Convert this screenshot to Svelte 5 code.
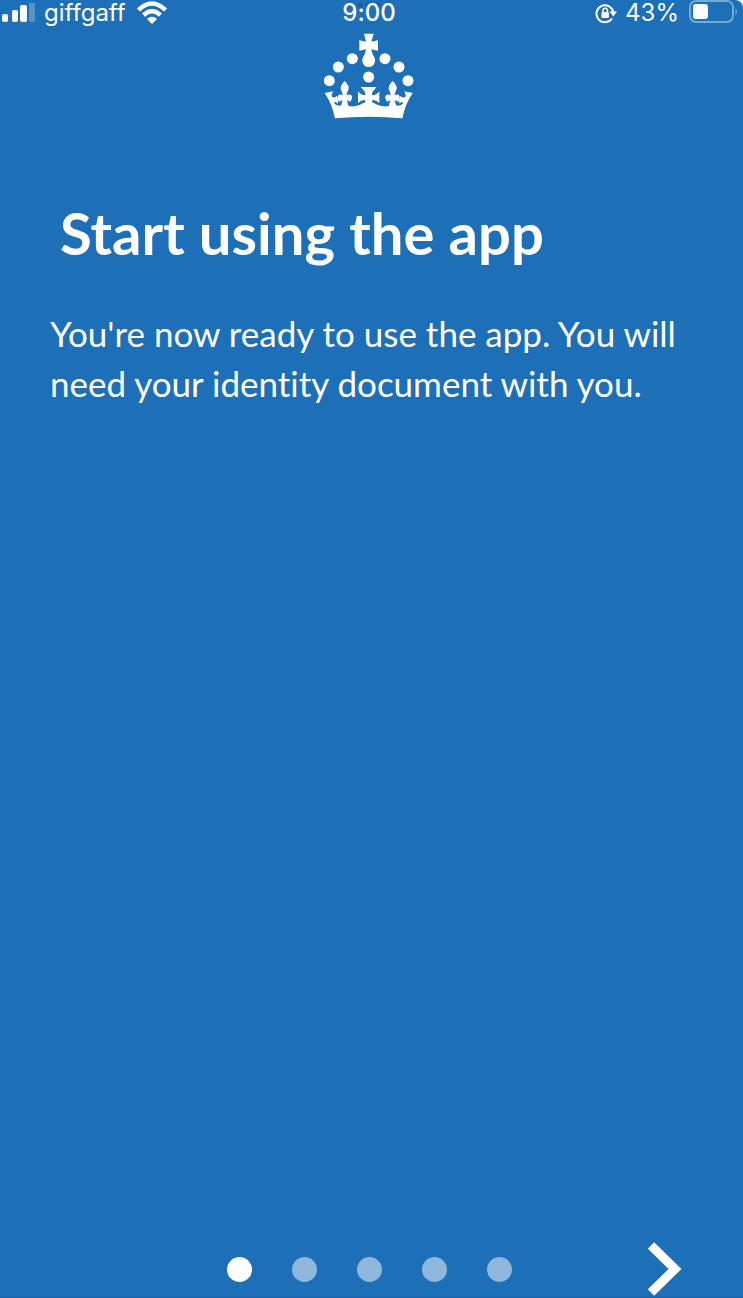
<script>
    const steps = 5
    const carrier = 'giffgaff'
    const time = '9:00'
    const charge = 43

    let current = $state(0)

    function next() {
        current = (current + 1) % steps
    }
</script>

<svelte:head><title>Start using the app</title></svelte:head>

<div class="screen">
    <div class="status">
        <div class="left">
            <svg class="signal" width="34" height="20" viewBox="0 0 34 20" fill="#fff" aria-hidden="true">
                <rect x="0" y="11" width="6" height="8" rx="2" />
                <rect x="10" y="7" width="6" height="12" rx="2" />
                <rect x="18" y="2" width="7" height="17" rx="2" />
                <rect x="27" y="-2" width="6" height="21" rx="2" opacity=".25" />
            </svg>
            <span class="carrier">{carrier}</span>
            <svg class="wifi" width="32" height="24" viewBox="0 0 32 24" aria-hidden="true">
                <path d="M2.500 9Q16-4 29.500 9" fill="none" stroke="#fff" stroke-width="4.500" />
                <path d="M7.500 14Q16 6.500 24.500 14" fill="none" stroke="#fff" stroke-width="4.500" />
                <path d="M11 18Q16 13.500 21 18L16 23Z" fill="#fff" />
            </svg>
        </div>
        <div class="time">
            <svg class="grip" width="24" height="6" viewBox="0 0 24 6" fill="#1a5c9c" aria-hidden="true">
                <circle cx="3" cy="3" r="2.500" />
                <circle cx="12" cy="3" r="2.500" />
                <circle cx="21" cy="3" r="2.500" />
            </svg>
            <span>{time}</span>
        </div>
        <div class="right">
            <svg class="lock" width="22" height="21" viewBox="0 0 22 21" aria-hidden="true">
                <path d="M18.300 9A8.500 8.500 0 1 0 17 15.500" fill="none" stroke="#fff" stroke-width="2" />
                <path d="M14.500 8.500h7.500l-3.700 5z" fill="#fff" />
                <path d="M8 9.500V7.500a2.200 2.200 0 0 1 4.400 0v2" fill="none" stroke="#fff" stroke-width="1.500" />
                <rect x="6.500" y="9" width="7.400" height="6" rx="1" fill="#fff" />
            </svg>
            <span class="charge">{charge}%</span>
            <svg class="battery" width="49" height="24" viewBox="0 0 49 24" aria-hidden="true">
                <rect x="1" y="1" width="43" height="21" rx="6" fill="none" stroke="#76a9d6" stroke-width="2" />
                <rect x="4" y="4" width="15" height="15" rx="3" fill="#fff" />
                <path d="M46.500 8q3 3.500 0 7z" fill="#76a9d6" />
            </svg>
        </div>
    </div>

    <svg class="crown" width="90" height="86" viewBox="42 100 270 258" fill="#fff" role="img" aria-label="Crown">
        <defs>
            <g id="side">
                <circle cx="127" cy="177" r="16.500" />
                <circle cx="85" cy="202" r="16.500" />
                <circle cx="58" cy="243" r="16.500" />
                <!-- fleur-de-lis -->
                <path d="M104 244Q90 258 92 268Q97 276 98 288Q91 281 85 287Q79 296 88 306L98 301L92 322H116L111 301L120 306Q130 296 124 287Q118 281 110 288Q111 276 116 268Q118 258 104 244Z" />
                <!-- outer half cross -->
                <path d="M44 280L69 275L64 289Q73 299 80 288Q87 300 84 312Q76 304 72 309Q76 316 84 318L75 356Q66 312 44 280Z" />
            </g>
        </defs>
        <use href="#side" />
        <use href="#side" transform="matrix(-1 0 0 1 352 0)" />
        <circle cx="176" cy="232" r="16.500" />
        <!-- top cross and drop -->
        <path d="M162 102h29l-7 24 20-4v31l-20-4q1 11 7 20 6 10 4 17-4 16-19 16t-19-16q-2-7 4-17 6-9 7-20l-20 4v-31l20 4z" />
        <!-- middle cross -->
        <path d="M152 262H200L187 277L186 287Q200 287 208 275V310Q198 299 186 301Q186 312 196 322H156Q166 312 166 301Q154 299 144 310V275Q152 287 166 287L165 277Z" />
        <!-- band -->
        <path d="M70 312Q88 324 104 312Q118 324 138 319Q152 316 160 310H192Q200 316 214 319Q234 324 248 312Q264 324 282 312L277 356Q176 346 75 356Z" />
    </svg>

    <main>
        <h1>Start using the app</h1>
        <p>You're now ready to use the app. You will need your identity document with you.</p>
    </main>

    <footer>
        <div class="dots">
            {#each Array(steps) as _, i}
                <button class="dot" class:active={i === current} aria-label="Step {i + 1}" onclick={() => current = i}></button>
            {/each}
        </div>
        <button class="next" aria-label="Next" onclick={next}>
            <svg width="35" height="56" viewBox="0 0 35 56" aria-hidden="true">
                <path d="M4 4.500L28 28 4 51.500" fill="none" stroke="#fff" stroke-width="9" />
            </svg>
        </button>
    </footer>
</div>

<style>
    :global(body) {
        margin: 0;
        background: #fff;
    }

    .screen {
        box-sizing: border-box;
        min-height: 100vh;
        display: flex;
        flex-direction: column;
        padding-right: 5px;
        background: #1d6fb8;
        border-bottom: 1px solid #1a62a4;
        border-top-right-radius: 8px;
        color: #fff;
        font-family: Lato, "Noto Sans", sans-serif;
        font-variant-ligatures: none;
    }

    .status {
        display: grid;
        grid-template-columns: 1fr auto 1fr;
        align-items: center;
        height: 26px;
        font-family: Inter, sans-serif;
        font-size: 24px;
        line-height: 26px;
    }
    .left,
    .right {
        display: flex;
        align-items: center;
    }
    .signal {
        margin-left: 2px;
    }
    .carrier {
        margin: 0 10px 0 8px;
    }
    .time {
        position: relative;
        font-weight: 500;
    }
    .time span {
        position: relative;
    }
    /* window handle, it sits behind the clock */
    .grip {
        position: absolute;
        top: 2px;
        left: 50%;
        transform: translateX(-50%);
    }
    .right {
        justify-content: flex-end;
    }
    .battery {
        margin-bottom: 2px;
    }
    .charge {
        margin: 0 10px 0 8px;
    }

    .crown {
        align-self: center;
        margin-top: 7px;
    }

    main {
        flex: 1;
        padding: 74px 50px 0;
    }
    h1 {
        margin: 0 10px;
        font-size: 58px;
        line-height: 80px;
        font-weight: 700;
    }
    p {
        margin: 35px 0 0;
        font-size: 35px;
        line-height: 50px;
    }

    footer {
        display: grid;
        grid-template-columns: 1fr auto 1fr;
        align-items: center;
    }
    .dots {
        grid-column: 2;
        display: flex;
        gap: 40px;
    }
    button {
        padding: 0;
        border: none;
        background: none;
        cursor: pointer;
    }
    .dot {
        width: 25px;
        height: 25px;
        border-radius: 50%;
        background: #8fb7dc;
    }
    .active {
        background: #fff;
    }
    .next {
        justify-self: end;
        margin-right: 56px;
    }
    .next svg {
        display: block;
    }
</style>
